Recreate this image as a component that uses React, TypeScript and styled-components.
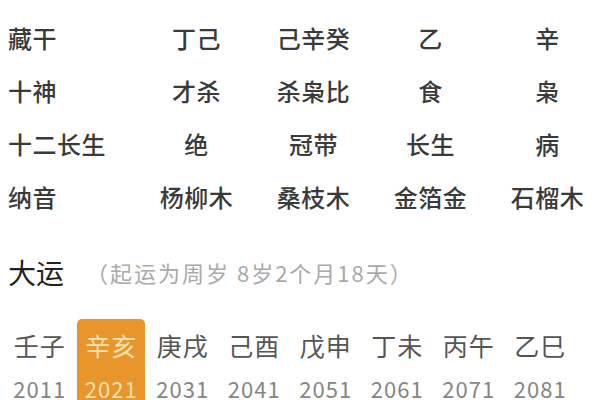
import React from "react";
import styled, { createGlobalStyle } from "styled-components";

const Global = createGlobalStyle`
  html, body { margin: 0; padding: 0; background: #ffffff; }
  body { font-family: "Noto Sans CJK SC", "Noto Sans", sans-serif; overflow: hidden; }
`;

const Page = styled.div`
  width: 600px;
  height: 400px;
  overflow: hidden;
  background: #fff;
  display: flex;
  flex-direction: column;
`;

const Table = styled.div`
  padding: 11px 0 0 8px;
  display: grid;
  grid-template-columns: 130px repeat(4, 117px);
  grid-auto-rows: 53px;
  align-items: center;
`;

const Label = styled.div`
  font-size: 24px;
  font-weight: 500;
  color: #3a3a3a;
  white-space: nowrap;
  letter-spacing: 0.5px;
`;

const Cell = styled.div`
  font-size: 24px;
  font-weight: 500;
  color: #3a3a3a;
  text-align: center;
  white-space: nowrap;
  letter-spacing: 0.5px;
`;

const Band = styled.div`
  margin: 15px 0 0 8px;
  height: 5px;
  background: #f4f4f4;
`;

const Header = styled.div`
  margin-top: 14px;
  padding-left: 8px;
  display: flex;
  align-items: center;
  gap: 22px;
  height: 40px;
`;

const Title = styled.span`
  font-size: 28px;
  color: #222;
`;

const Sub = styled.span`
  font-size: 22px;
  letter-spacing: 2px;
  color: #aaa;
`;

const Yun = styled.div`
  margin-top: 27px;
  padding-left: 4px;
  display: grid;
  grid-template-columns: repeat(8, 71.5px);
`;

const YunCell = styled.div<{ $active?: boolean }>`
  justify-self: center;
  width: 68px;
  height: 100px;
  padding-top: 9px;
  box-sizing: border-box;
  border-radius: 5px 5px 0 0;
  background: ${(p) => (p.$active ? "#e8952b" : "transparent")};
  display: flex;
  flex-direction: column;
  align-items: center;
`;

const Gz = styled.div<{ $active?: boolean }>`
  font-size: 25px;
  line-height: 34px;
  color: ${(p) => (p.$active ? "#fbe2b2" : "#555")};
  letter-spacing: 1px;
  white-space: nowrap;
`;

const Year = styled.div<{ $active?: boolean }>`
  margin-top: 11px;
  font-size: 22px;
  line-height: 30px;
  letter-spacing: 1px;
  color: ${(p) => (p.$active ? "#fbe2b2" : "#858585")};
`;

const rows: [string, string[]][] = [
  ["藏干", ["丁己", "己辛癸", "乙", "辛"]],
  ["十神", ["才杀", "杀枭比", "食", "枭"]],
  ["十二长生", ["绝", "冠带", "长生", "病"]],
  ["纳音", ["杨柳木", "桑枝木", "金箔金", "石榴木"]],
];

const yun = [
  ["壬子", "2011"],
  ["辛亥", "2021"],
  ["庚戌", "2031"],
  ["己酉", "2041"],
  ["戊申", "2051"],
  ["丁未", "2061"],
  ["丙午", "2071"],
  ["乙巳", "2081"],
];

export default function App() {
  return (
    <Page>
      <Global />
      <Table>
        {rows.map(([label, cells]) => (
          <React.Fragment key={label}>
            <Label>{label}</Label>
            {cells.map((c, i) => (
              <Cell key={i}>{c}</Cell>
            ))}
          </React.Fragment>
        ))}
      </Table>
      <Band />
      <Header>
        <Title>大运</Title>
        <Sub>（起运为周岁 8岁2个月18天）</Sub>
      </Header>
      <Yun>
        {yun.map(([g, y], i) => (
          <YunCell key={y} $active={i === 1}>
            <Gz $active={i === 1}>{g}</Gz>
            <Year $active={i === 1}>{y}</Year>
          </YunCell>
        ))}
      </Yun>
    </Page>
  );
}
